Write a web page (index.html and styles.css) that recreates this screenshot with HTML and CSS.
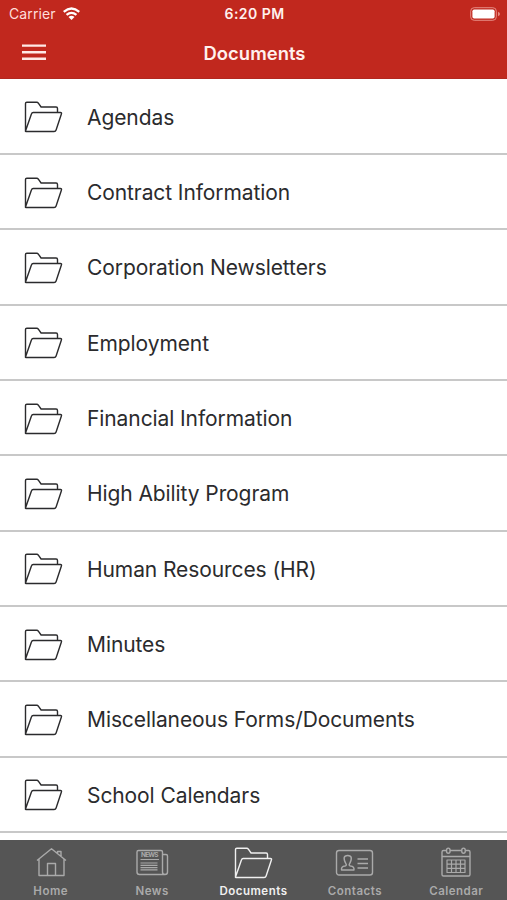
FILE: index.html
```html
<!DOCTYPE html>
<html lang="en">
<head>
<meta charset="utf-8">
<title>Documents</title>
<link rel="stylesheet" href="styles.css">
</head>
<body>
<svg class="defs" width="0" height="0">
  <symbol id="folder" viewBox="0 0 40 34">
    <path d="M2.500 31V3.600Q2.500 2.300 3.800 2.300H13.700Q14.800 2.300 15.500 3.300L18.100 7H33.100Q34.500 7 34.500 8.400V12.500M2.500 31 8.500 13.800Q8.900 12.500 10.200 12.500H37.500Q38.900 12.500 38.400 14L33.100 30Q32.600 31.500 31.100 31.500H3.500Q2.200 31.500 2.500 31Z"/>
  </symbol>
</svg>
<div class="app">
  <header class="header">
    <div class="status">
      <div class="carrier"><span>Carrier</span>
        <svg class="wifi" viewBox="0 0 20 15"><path d="M1.700 5.300Q10-2 18.300 5.300M4.700 8.500Q10 4 15.300 8.500"/><path class="dot" d="M6.800 10.700Q10 8 13.200 10.700L10 14Z"/></svg>
      </div>
      <span class="time">6:20 PM</span>
      <svg class="battery" viewBox="0 0 30 14"><rect class="shell" x=".7" y=".7" width="25.600" height="12.600" rx="3.500"/><rect class="charge" x="2.400" y="2.400" width="22.200" height="9.200" rx="1.800"/><path class="tip" d="M28 4.700Q30 5.500 30 7T28 9.300Z"/></svg>
    </div>
    <div class="navbar">
      <svg class="menu" viewBox="0 0 24 18"><path d="M0 1.600H24M0 8.200H24M0 14.800H24"/></svg>
      <h1 class="title">Documents</h1>
    </div>
  </header>
  <main class="list">
    <div class="row"><svg class="folder"><use href="#folder"/></svg><span>Agendas</span></div>
    <div class="row"><svg class="folder"><use href="#folder"/></svg><span>Contract Information</span></div>
    <div class="row"><svg class="folder"><use href="#folder"/></svg><span>Corporation Newsletters</span></div>
    <div class="row"><svg class="folder"><use href="#folder"/></svg><span>Employment</span></div>
    <div class="row"><svg class="folder"><use href="#folder"/></svg><span>Financial Information</span></div>
    <div class="row"><svg class="folder"><use href="#folder"/></svg><span>High Ability Program</span></div>
    <div class="row"><svg class="folder"><use href="#folder"/></svg><span>Human Resources (HR)</span></div>
    <div class="row"><svg class="folder"><use href="#folder"/></svg><span>Minutes</span></div>
    <div class="row"><svg class="folder"><use href="#folder"/></svg><span>Miscellaneous Forms/Documents</span></div>
    <div class="row"><svg class="folder"><use href="#folder"/></svg><span>School Calendars</span></div>
  </main>
  <nav class="tabs">
    <div class="tab">
      <svg viewBox="0 0 40 34"><path d="M6 14.500 20.500 2.800 35 14.500M8 13V29.500H33V13M16.500 29.500V17.500H24.500V29.500M26.500 7V5.500H30V10.500"/></svg>
      <span>Home</span>
    </div>
    <div class="tab">
      <svg viewBox="0 0 40 34"><path d="M30.500 26V6Q30.500 4.500 29 4.500H6.500Q5 4.500 5 6V26Q5 28.500 7.500 28.500H33Q35.500 28.500 35.500 26V10Q35.500 8.500 34 8.500H30.500M30.500 26Q30.500 28.500 33 28.500"/><path class="fine" d="M8.500 13.500H27M8.500 17H25.500M8.500 19.300H25.500M8.500 21.600H25.500M8.500 23.900H25.500"/><text class="masthead" x="9" y="11.400" textLength="17.500">NEWS</text></svg>
      <span>News</span>
    </div>
    <div class="tab active">
      <svg><use href="#folder"/></svg>
      <span>Documents</span>
    </div>
    <div class="tab">
      <svg viewBox="0 0 40 34"><rect x="1.500" y="4.500" width="36" height="24.500" rx="2.500"/><path d="M6.500 24Q6 20.500 10 20Q12 19.500 11 18Q6.500 9.500 12.700 9.500T14.500 18Q13.500 19.500 15.500 20Q19.500 20.500 19 24ZM22.500 13H33M22.500 17.500H33M22.500 22H33"/></svg>
      <span>Contacts</span>
    </div>
    <div class="tab">
      <svg viewBox="0 0 40 34"><path d="M10.500 4.500H7.500Q6 4.500 6 6V28.500Q6 30 7.500 30H32.500Q34 30 34 28.500V6Q34 4.500 32.500 4.500H29.500M14 4.500H25.500M6 10.500H34"/><ellipse cx="12.300" cy="4.700" rx="1.800" ry="2.600"/><ellipse cx="27.500" cy="4.700" rx="1.800" ry="2.600"/><path class="fine" d="M11 14H29V26.500H11ZM15.500 14V26.500M20 14V26.500M24.500 14V26.500M11 18.200H29M11 22.400H29"/></svg>
      <span>Calendar</span>
    </div>
  </nav>
</div>
</body>
</html>
```
FILE: styles.css
```css
* { box-sizing: border-box; }
body { margin: 0; font-family: Inter, "Liberation Sans", sans-serif; background: #fff; }
svg { display: block; fill: none; stroke: currentColor; stroke-linejoin: round; }
.defs { position: absolute; }
.app { width: 507px; height: 900px; display: flex; flex-direction: column; overflow: hidden; }
.header { height: 79px; flex: none; background: #c1281e; color: #fff; border-bottom: 1px solid #b2281f; }
.status { height: 27px; padding: 0 7px 0 9px; display: grid; grid-template-columns: 1fr auto 1fr; align-items: center; }
.carrier { display: flex; align-items: center; gap: 6px; font-size: 14px; letter-spacing: .1px; color: #ffdeda; }
.wifi { width: 19px; height: 14px; stroke: #fff; stroke-width: 2.4; }
.wifi .dot { fill: #fff; stroke: none; }
.time { font-size: 14px; font-weight: 600; letter-spacing: .45px; color: #fff1ee; }
.battery { width: 30px; height: 14px; justify-self: end; }
.shell { stroke: #e58b83; stroke-width: 1; }
.charge { fill: #fff; stroke: none; }
.tip { fill: #e58b83; stroke: none; }
.navbar { height: 51px; padding: 0 22px; display: grid; grid-template-columns: 24px 1fr 24px; align-items: center; }
.menu { width: 24px; height: 18px; stroke: #ffe9e6; stroke-width: 2.400; }
.title { margin: 0; padding-left: 2px; text-align: center; font-size: 18.400px; font-weight: 600; letter-spacing: .05px; color: #fff1ee; }
.list { flex: 1; padding-top: .5px; display: grid; grid-auto-rows: 75.350px; align-content: start; color: #2b2b2d; }
.row { display: flex; align-items: center; padding: 2px 0 0 23px; gap: 24px; border-bottom: 2px solid #c8c8c8; font-size: 21px; letter-spacing: -.09px; }
.folder { width: 40px; height: 34px; stroke-width: 1.400; }
.tabs { height: 60px; flex: none; background: #555; color: #aaa; display: grid; grid-template-columns: repeat(5, 1fr); }
.tab { display: flex; flex-direction: column; align-items: center; padding-top: 6px; font-size: 11.500px; font-weight: 600; letter-spacing: .5px; line-height: 16px; }
.tab svg { width: 40px; height: 34px; margin-bottom: 3px; stroke-width: 1.400; }
.tab .fine { stroke-width: 1.200; }
.masthead { font-size: 6.500px; font-weight: 700; fill: currentColor; stroke: none; letter-spacing: 0; }
.active { color: #f0f0f0; }
```
